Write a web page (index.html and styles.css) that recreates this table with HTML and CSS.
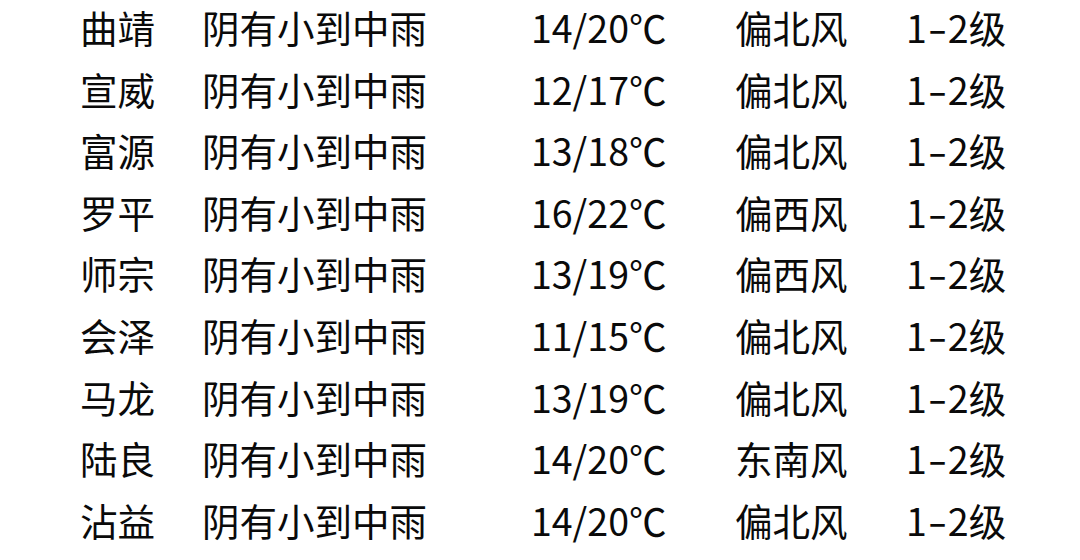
FILE: index.html
```html
<!DOCTYPE html>
<html lang="zh">
<head>
<meta charset="utf-8">
<link rel="stylesheet" href="styles.css">
</head>
<body>
<div class="table">
  <div class="row"><span class="city">曲靖</span><span class="wx">阴有小到中雨</span><span class="temp">14/20℃</span><span class="dir">偏北风</span><span class="lvl">1<span class="dash">-</span>2级</span></div>
  <div class="row"><span class="city">宣威</span><span class="wx">阴有小到中雨</span><span class="temp">12/17℃</span><span class="dir">偏北风</span><span class="lvl">1<span class="dash">-</span>2级</span></div>
  <div class="row"><span class="city">富源</span><span class="wx">阴有小到中雨</span><span class="temp">13/18℃</span><span class="dir">偏北风</span><span class="lvl">1<span class="dash">-</span>2级</span></div>
  <div class="row"><span class="city">罗平</span><span class="wx">阴有小到中雨</span><span class="temp">16/22℃</span><span class="dir">偏西风</span><span class="lvl">1<span class="dash">-</span>2级</span></div>
  <div class="row"><span class="city">师宗</span><span class="wx">阴有小到中雨</span><span class="temp">13/19℃</span><span class="dir">偏西风</span><span class="lvl">1<span class="dash">-</span>2级</span></div>
  <div class="row"><span class="city">会泽</span><span class="wx">阴有小到中雨</span><span class="temp">11/15℃</span><span class="dir">偏北风</span><span class="lvl">1<span class="dash">-</span>2级</span></div>
  <div class="row"><span class="city">马龙</span><span class="wx">阴有小到中雨</span><span class="temp">13/19℃</span><span class="dir">偏北风</span><span class="lvl">1<span class="dash">-</span>2级</span></div>
  <div class="row"><span class="city">陆良</span><span class="wx">阴有小到中雨</span><span class="temp">14/20℃</span><span class="dir">东南风</span><span class="lvl">1<span class="dash">-</span>2级</span></div>
  <div class="row"><span class="city">沾益</span><span class="wx">阴有小到中雨</span><span class="temp">14/20℃</span><span class="dir">偏北风</span><span class="lvl">1<span class="dash">-</span>2级</span></div>
</div>
</body>
</html>
```

FILE: styles.css
```css
html, body {
  margin: 0;
  padding: 0;
  background: #ffffff;
}
body {
  width: 1080px;
  height: 560px;
  overflow: hidden;
  font-family: "Noto Sans CJK SC", "Noto Sans", sans-serif;
  color: #0a0a0a;
}
.table {
  display: flex;
  flex-direction: column;
  padding-left: 80px;
  margin-top: -4px;
}
.row {
  display: grid;
  grid-template-columns: 122px 329px 204px 171px 1fr;
  height: 61.6px;
  line-height: 61.6px;
  font-size: 37.5px;
  white-space: nowrap;
}
.dash {
  display: inline-block;
  transform: scaleX(1.5);
  margin: 0 4px;
}
```
